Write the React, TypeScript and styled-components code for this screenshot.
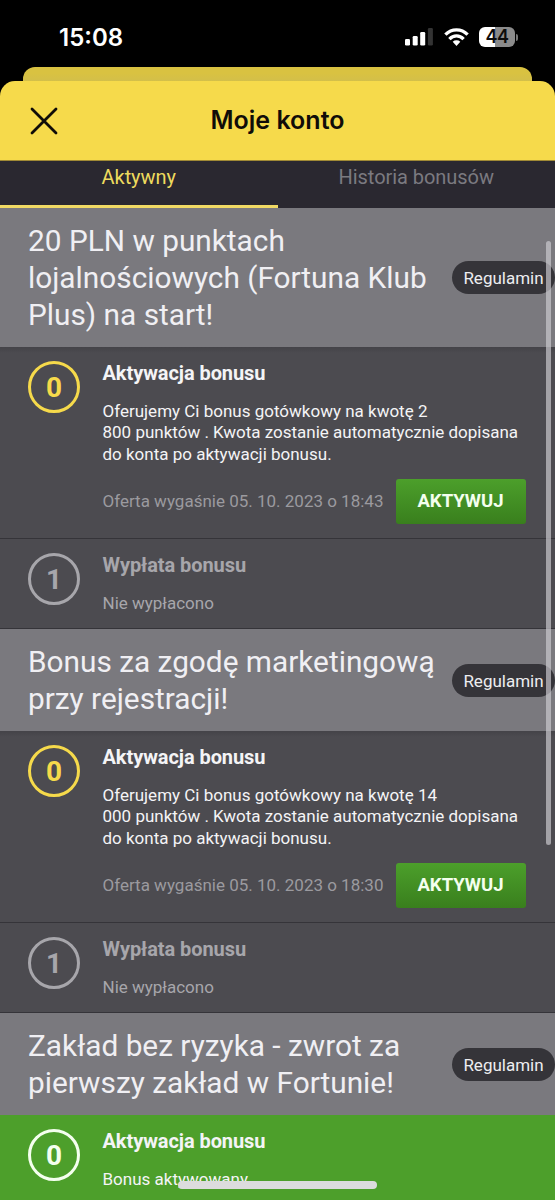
import React from "react";
import styled, { createGlobalStyle, css } from "styled-components";

const GlobalStyle = createGlobalStyle`
  * { box-sizing: border-box; }
  html, body { margin: 0; background: #000; overflow: hidden; }
  body { font-family: Roboto, "Liberation Sans", sans-serif; }
  h1, h2, h3, p { margin: 0; }
  button { border: 0; padding: 0; font: inherit; }
`;

const Screen = styled.div`
  position: relative;
  width: 555px;
  height: 1200px;
  overflow: hidden;
  background: #000;
  display: flex;
  flex-direction: column;
`;

const StatusBar = styled.header`
  height: 67px;
  flex: none;
  display: flex;
  align-items: center;
  justify-content: space-between;
  padding: 8px 37px 0 59px;
  color: #fff;
`;

const Clock = styled.span`
  font: 600 24px/30px Inter, Roboto, sans-serif;
`;

const StatusIcons = styled.div`
  display: flex;
  align-items: center;
  gap: 10.500px;
  margin-top: -1px;
  svg { display: block; }
`;

const BackSheet = styled.div`
  flex: none;
  height: 14px;
  margin: 0 23px;
  border-radius: 12px 12px 0 0;
  background: linear-gradient(#d9c241 45%, #d3bf4a);
`;

const TitleBar = styled.div`
  flex: none;
  height: 80px;
  display: grid;
  grid-template-columns: 88px 1fr 88px;
  align-items: center;
  border-radius: 15px 15px 0 0;
  background: #f6da4b;
  border-bottom: 1px solid #a08a35;
`;

const CloseButton = styled.button`
  background: none;
  display: flex;
  justify-content: center;
`;

const ScreenTitle = styled.h1`
  padding-bottom: 2px;
  text-align: center;
  color: #100c08;
  font: 600 25px/30px Inter, Roboto, sans-serif;
`;

const Tabs = styled.nav`
  flex: none;
  height: 47px;
  display: flex;
  background: #2a2830;
`;

const Tab = styled.div<{ $active?: boolean }>`
  flex: 1;
  text-align: center;
  font-size: 20px;
  letter-spacing: -0.05px;
  line-height: 32px;
  color: ${(p) => (p.$active ? "#eedb5e" : "#7b7a80")};
  border-bottom: 3px solid ${(p) => (p.$active ? "#f0d964" : "transparent")};
`;

const Scroller = styled.main`
  flex: 1;
  min-height: 0;
  overflow: hidden;
`;

const OfferHeader = styled.div`
  display: flex;
  align-items: center;
  justify-content: space-between;
  padding: 14px 0 14px 28px;
  background: #7a797e;
  color: #f0eff3;
`;

const OfferTitle = styled.h2`
  font-size: 29.8px;
  font-weight: 400;
  line-height: 37px;
  white-space: pre;
`;

const Terms = styled.button`
  width: 103px;
  height: 33px;
  flex: none;
  border-radius: 17px;
  background: #353439;
  color: #ededf0;
  font-size: 17px;
  line-height: 33px;
  padding-top: 1px;
  text-align: center;
`;

type Tone = "current" | "pending" | "done";

const toneColor = { current: "#f6da4b", pending: "#a7a6ab", done: "#f4ffee" };

const Step = styled.section<{ $tone: Tone; $height: number }>`
  display: flex;
  gap: 22.5px;
  height: ${(p) => p.$height}px;
  padding: 15px 28px 0;
  background: ${(p) => (p.$tone === "done" ? "#4d9f2b" : "#4c4b50")};
  ${(p) =>
    p.$tone !== "done" &&
    css`
      border-bottom: 1px solid #353439;
    `}
  ${(p) =>
    p.$tone === "current" &&
    css`
      background-image: linear-gradient(#444348, transparent 6px);
    `}
`;

const StepNumber = styled.div<{ $tone: Tone }>`
  flex: none;
  width: 52px;
  height: 52px;
  margin-top: -1px;
  border: 3px solid ${(p) => toneColor[p.$tone]};
  border-radius: 50%;
  color: ${(p) => toneColor[p.$tone]};
  font-size: 28px;
  font-weight: 700;
  line-height: 47px;
  text-align: center;
`;

const StepBody = styled.div<{ $tone: Tone }>`
  color: ${(p) => (p.$tone === "pending" ? "#a7a6ab" : "#f4f4f6")};
  flex: 1;
`;

const StepTitle = styled.h3`
  font-size: 20px;
  letter-spacing: -0.07px;
  font-weight: 700;
  line-height: 22px;
  white-space: nowrap;
`;

const StepText = styled.p`
  margin-top: 17px;
  font-size: 17px;
  line-height: 21.3px;
  white-space: pre;
`;

const OfferFooter = styled.div`
  display: flex;
  align-items: center;
  justify-content: space-between;
  margin-top: 14px;
`;

const Expiry = styled.span`
  color: #9b9a9f;
  font-size: 17px;
  white-space: nowrap;
`;

const ActivateButton = styled.button`
  flex: none;
  width: 130px;
  height: 45px;
  margin-right: 1px;
  padding: 0 1px 1px 0;
  border-radius: 3px;
  background: linear-gradient(#4c9f2b, #397f1d);
  color: #f4ffee;
  font-size: 18.5px;
  font-weight: 700;
  line-height: 44px;
`;

const ScrollThumb = styled.div`
  position: absolute;
  top: 241px;
  left: 546px;
  width: 5px;
  height: 604px;
  border-radius: 3px;
  background: rgba(205, 204, 210, 0.68);
`;

const HomeIndicator = styled.div`
  position: absolute;
  left: 178px;
  top: 1181px;
  width: 199px;
  height: 8px;
  border-radius: 4px;
  background: #dcdcdd;
`;

const Signal = () => (
  <svg width="28" height="18" viewBox="0 0 28 18">
    <rect x="0" y="11" width="5" height="6.5" rx="1.3" fill="#fff" />
    <rect x="7.7" y="8" width="5" height="9.5" rx="1.3" fill="#fff" />
    <rect x="15.2" y="4" width="5" height="13.5" rx="1.3" fill="#fff" />
    <rect x="22.9" y="0" width="5" height="17.5" rx="1.3" fill="#333" />
  </svg>
);

const Wifi = () => (
  <svg width="25" height="18" viewBox="0 0 25 18">
    <g fill="none" stroke="#fff" strokeWidth="3.3">
      <path d="M1.4 6.6C7.6 .2 17.400 .2 23.600 6.600" />
      <path d="M5.400 11.100c4-4.200 10.200-4.200 14.200 0" />
    </g>
    <path d="M8.700 13.800a5.600 5.600 0 0 1 7.600 0L12.500 17.900Z" fill="#fff" />
  </svg>
);

const BatteryShell = styled.div`
  width: 36px;
  height: 20px;
  border-radius: 6px;
  background: linear-gradient(90deg, #fff 44%, #8b8b8b 44%);
  color: #0c0c0c;
  font: 600 18px/20px Inter, Roboto, sans-serif;
  letter-spacing: -0.5px;
  text-align: center;
`;

const BatteryWrap = styled.div`
  display: flex;
  align-items: center;
  gap: 1px;
`;

const BatteryTip = styled.i`
  width: 2px;
  height: 7px;
  border-radius: 0 3px 3px 0;
  background: #777;
`;

function Offer({ title, amount, expires }: { title: string; amount: string; expires: string }) {
  return (
    <article>
      <OfferHeader>
        <OfferTitle>{title}</OfferTitle>
        <Terms>Regulamin</Terms>
      </OfferHeader>
      <Step $tone="current" $height={192}>
        <StepNumber $tone="current">0</StepNumber>
        <StepBody $tone="current">
          <StepTitle>Aktywacja bonusu</StepTitle>
          <StepText>{`Oferujemy Ci bonus gotówkowy na kwotę ${amount} punktów . Kwota zostanie automatycznie dopisana\ndo konta po aktywacji bonusu.`}</StepText>
          <OfferFooter>
            <Expiry>Oferta wygaśnie {expires}</Expiry>
            <ActivateButton>AKTYWUJ</ActivateButton>
          </OfferFooter>
        </StepBody>
      </Step>
      <Step $tone="pending" $height={90}>
        <StepNumber $tone="pending">1</StepNumber>
        <StepBody $tone="pending">
          <StepTitle>Wypłata bonusu</StepTitle>
          <StepText>Nie wypłacono</StepText>
        </StepBody>
      </Step>
    </article>
  );
}

export default function App() {
  return (
    <>
      <GlobalStyle />
      <Screen>
        <StatusBar>
          <Clock>15:08</Clock>
          <StatusIcons>
            <Signal />
            <Wifi />
            <BatteryWrap>
              <BatteryShell>44</BatteryShell>
              <BatteryTip />
            </BatteryWrap>
          </StatusIcons>
        </StatusBar>
        <BackSheet />
        <TitleBar>
          <CloseButton aria-label="Zamknij">
            <svg width="28" height="28" viewBox="0 0 28 28">
              <path d="M2 2l24 24M26 2L2 26" stroke="#100c08" strokeWidth="2.8" strokeLinecap="round" />
            </svg>
          </CloseButton>
          <ScreenTitle>Moje konto</ScreenTitle>
        </TitleBar>
        <Tabs>
          <Tab $active>Aktywny</Tab>
          <Tab>Historia bonusów</Tab>
        </Tabs>
        <Scroller>
          <Offer
            title={"20 PLN w punktach\nlojalnościowych (Fortuna Klub\nPlus) na start!"}
            amount={"2\n800"}
            expires="05. 10. 2023 o 18:43"
          />
          <Offer
            title={"Bonus za zgodę marketingową\nprzy rejestracji!"}
            amount={"14\n000"}
            expires="05. 10. 2023 o 18:30"
          />
          <OfferHeader>
            <OfferTitle>{"Zakład bez ryzyka - zwrot za\npierwszy zakład w Fortunie!"}</OfferTitle>
            <Terms>Regulamin</Terms>
          </OfferHeader>
          <Step $tone="done" $height={90}>
            <StepNumber $tone="done">0</StepNumber>
            <StepBody $tone="done">
              <StepTitle>Aktywacja bonusu</StepTitle>
              <StepText>Bonus aktywowany</StepText>
            </StepBody>
          </Step>
        </Scroller>
        <ScrollThumb />
        <HomeIndicator />
      </Screen>
    </>
  );
}
